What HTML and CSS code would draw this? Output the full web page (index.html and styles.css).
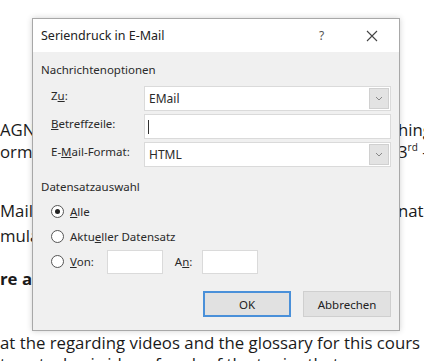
FILE: index.html
```html
<!DOCTYPE html>
<html lang="de">
<head>
  <meta charset="UTF-8" />
  <title>Seriendruck in E-Mail</title>
  <link rel="stylesheet" href="styles.css">
</head>
<body>
  <div class="doc">
    <p class="para p1">
      <span class="line"><span class="l">AGN</span><span class="r">hing</span></span>
      <span class="line"><span class="l">orma</span><span class="r">3<sup>rd</sup> -</span></span>
    </p>
    <p class="para p2">
      <span class="line"><span class="l">Mail</span><span class="r">nati</span></span>
      <span class="line"><span class="l">mula</span></span>
    </p>
    <p class="para p3">
      <span class="line"><span class="l"><strong>re a</strong></span></span>
    </p>
    <p class="para p4">
      <span class="line">at the regarding videos and the glossary for this cours</span>
      <span class="line">to get a basic idea of each of the topics that</span>
    </p>
  </div>

  <div class="dialog">
    <div class="titlebar">
      <span class="title">Seriendruck in E-Mail</span>
      <span class="help">?</span>
      <svg class="close" width="12" height="12" viewBox="0 0 12 12"><path d="M1 1 L11 11 M11 1 L1 11" stroke="#444" stroke-width="1.1"/></svg>
    </div>
    <div class="dlg-body">
      <div class="group">Nachrichtenoptionen</div>
      <div class="form">
        <label>Z<u>u</u>:</label>
        <div class="combo"><span class="val">EMail</span><span class="drop"><svg width="8" height="5" viewBox="0 0 8 5"><path d="M1 1 L4 4 L7 1" fill="none" stroke="#888" stroke-width="1"/></svg></span></div>
        <label><u>B</u>etreffzeile:</label>
        <div class="field text"><span class="caret"></span></div>
        <label>E-<u>M</u>ail-Format:</label>
        <div class="combo"><span class="val">HTML</span><span class="drop"><svg width="8" height="5" viewBox="0 0 8 5"><path d="M1 1 L4 4 L7 1" fill="none" stroke="#888" stroke-width="1"/></svg></span></div>
      </div>
      <div class="group second">Datensatzauswahl</div>
      <div class="radios">
        <div class="radio on"><span class="dot"></span><span><u>A</u>lle</span></div>
        <div class="radio"><span class="dot"></span><span>Aktu<u>e</u>ller Datensatz</span></div>
        <div class="radio range">
          <span class="dot"></span><span><u>V</u>on:</span>
          <span class="small-field from"></span>
          <span class="an">A<u>n</u>:</span>
          <span class="small-field to"></span>
        </div>
      </div>
      <div class="buttons">
        <button class="btn default">OK</button>
        <button class="btn">Abbrechen</button>
      </div>
    </div>
  </div>
</body>
</html>
```

FILE: styles.css
```css
body { margin: 0; width: 424px; height: 361px; overflow: hidden; background: #fff; font-family: "Open Sans", sans-serif; color: #1a1a1a; }

/* word document behind the dialog */
.doc { font-size: 16.8px; line-height: 22px; }
.para { margin: 0; }
.line { display: flex; white-space: nowrap; }
.l { width: 398px; flex: none; }
.r { flex: none; }
.r sup { font-size: 10px; line-height: 0; vertical-align: 7px; }
.p1 { padding-top: 119px; }
.p2 { padding-top: 37px; }
.p2 .line { height: 25px; }
.p3 { padding-top: 18px; }
.p4 { padding-top: 42px; line-height: 21px; }
.p4 .line { height: 21px; }

/* dialog */
.dialog { position: absolute; left: 32px; top: 18px; width: 368px; height: 313px; box-sizing: border-box; border: 1px solid #a8a8a8; background: #f0f0f0; box-shadow: 0 0 6px rgba(0,0,0,0.18); font-family: "Noto Sans", sans-serif; font-size: 11.5px; color: #2a2a2a; }
.titlebar { height: 33px; background: #fff; display: flex; align-items: center; padding-left: 8px; }
.title { flex: 1; font-size: 12.5px; color: #222; }
.help { width: 14px; margin-right: 33px; font-size: 12px; color: #555; }
.close { margin-right: 21px; }

.dlg-body { padding: 9px 8px 0 8px; }
.group { height: 18px; line-height: 18px; }
.group.second { margin-top: 11px; }

.form { display: grid; grid-template-columns: 103px 247px; row-gap: 3px; margin-top: 7px; }
.form label { padding-left: 10px; line-height: 20px; }
.combo, .field { height: 25px; box-sizing: border-box; border: 1px solid #dadada; background: #fff; display: flex; align-items: center; }
.val { flex: 1; padding-left: 4px; font-size: 12px; }
.drop { width: 18px; margin: 1px; align-self: stretch; background: #e3e3e3; border: 1px solid #d0d0d0; display: flex; align-items: center; justify-content: center; }
.caret { width: 1px; height: 14px; background: #333; margin-left: 3px; }

.radios { display: flex; flex-direction: column; margin-top: 3px; padding-left: 10px; }
.radio { height: 25px; display: flex; align-items: center; gap: 6px; }
.dot { width: 11px; height: 11px; border: 1px solid #555; border-radius: 50%; background: #fff; flex: none; position: relative; }
.radio.on .dot::after { content: ""; position: absolute; left: 3px; top: 3px; width: 5px; height: 5px; border-radius: 50%; background: #222; }
.small-field { width: 56px; height: 24px; box-sizing: border-box; border: 1px solid #dadada; background: #fff; }
.small-field.from { margin-left: 7px; }
.an { margin-left: 6px; }
.small-field.to { margin-left: 4px; }

.buttons { display: flex; justify-content: flex-end; gap: 12px; margin-top: 17px; }
.btn { width: 88px; height: 26px; box-sizing: border-box; background: #e1e1e1; border: 1px solid #cfcfcf; font-family: "Noto Sans", sans-serif; font-size: 11.5px; color: #222; padding: 0; }
.btn.default { border: 2px solid #4a90d9; }
```
